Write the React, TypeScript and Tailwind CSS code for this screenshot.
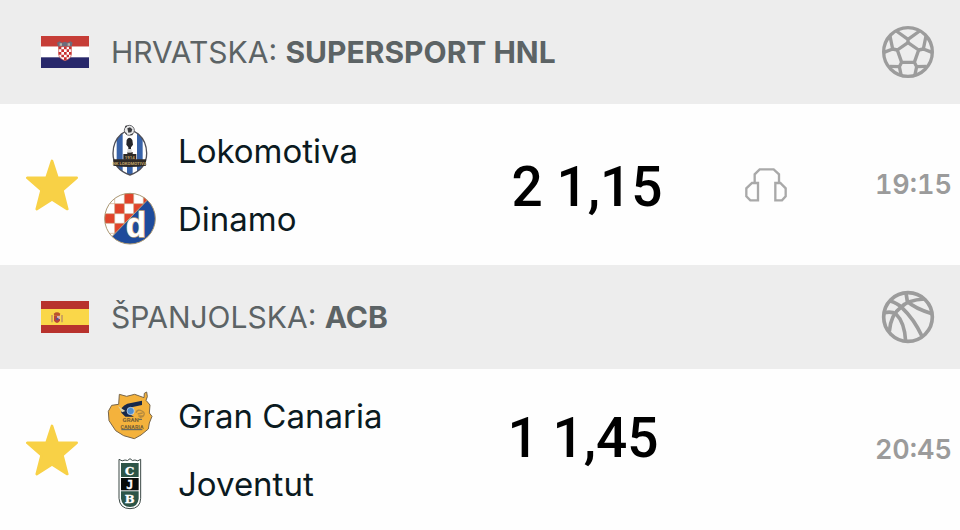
import type { ReactNode } from "react";
import { twMerge } from "tailwind-merge";

function CroatiaFlag() {
    return (
        <svg viewBox="0 0 144 96" className="w-12 h-8 shrink-0" role="img" aria-label="Hrvatska">
            <rect width="144" height="32" fill="#c63d37" />
            <rect y="32" width="144" height="32" fill="#fff" />
            <rect y="64" width="144" height="32" fill="#28286b" />
            <path d="M48 20l8-4 7 4 9-3 8 3 8-4 7 4-4 14H52z" fill="#6b6d7c" />
            <path d="M56 22h7v7h-7zM80 22h7v7h-7z" fill="#b9b3a6" />
            <path d="M53 32h38v22q0 14-19 20-19-6-19-20z" fill="#fff" stroke="#c63d37" strokeWidth="2" />
            <path
                d="M53 32h8v8h-8zM69 32h8v8h-8zM84 32h7v8h-7zM61 40h8v8h-8zM77 40h7v8h-7zM53 48h8v8h-8zM69 48h8v8h-8zM84 48h7v8h-7zM61 56h8v8h-8zM77 56h7v8h-7zM69 64h8v8h-8z"
                fill="#c8302f"
            />
        </svg>
    );
}

function SpainFlag() {
    return (
        <svg viewBox="0 0 144 96" className="w-12 h-8 shrink-0" role="img" aria-label="Španjolska">
            <rect width="144" height="96" fill="#b8322d" />
            <rect y="24" width="144" height="48" fill="#fad749" />
            <path d="M31 42h4v22h-4zM61 42h4v22h-4z" fill="#b98a67" />
            <path d="M38 38q10-8 20 0l-2 6H40z" fill="#b8532d" />
            <path d="M39 44h18v14q-2 8-9 8t-9-8z" fill="#b8433a" />
            <path d="M48 45h9v9h-9z" fill="#d5b5b0" />
            <circle cx="49" cy="54" r="4" fill="#54548a" />
        </svg>
    );
}

function SoccerBall() {
    return (
        <svg
            viewBox="62 45 162 162"
            className="size-[54px] shrink-0"
            fill="none"
            stroke="#9c9c9c"
            strokeWidth="10"
            strokeLinejoin="round"
            role="img"
            aria-label="Nogomet"
        >
            <circle cx="143" cy="126" r="73" />
            <path d="M143 98l32 22-13 37h-38l-13-37z" />
            <path d="M143 98V88L108 63M143 88l35-25" />
            <path d="M111 120l-14-3-26 10M97 117l-8-39M175 120l14-3 26 10M189 117l8-39" />
            <path d="M124 157l-7 13-30-1M117 170l6 28M162 157l7 13 30-1M169 170l-6 28" />
        </svg>
    );
}

function Basketball() {
    return (
        <svg
            viewBox="62 45 162 162"
            className="size-[54px] shrink-0"
            fill="none"
            stroke="#9c9c9c"
            strokeWidth="11"
            role="img"
            aria-label="Košarka"
        >
            <circle cx="143" cy="126" r="73" />
            <path d="M88 77Q112 85 124 97 162 133 185 184" />
            <path d="M193 72Q140 75 122 97 92 118 87 169" />
            <path d="M71 113Q95 108 107 117 133 142 136 199" />
            <path d="M137 54l4 25Q163 100 215 116" />
        </svg>
    );
}

function Headphones() {
    return (
        <svg
            viewBox="764 83 126 102"
            className="w-[42px] h-[34px]"
            fill="none"
            stroke="#a9a9a9"
            strokeWidth="7"
            role="img"
            aria-label="Audio prijenos"
        >
            <path d="M793 128v-26l15-15h42l16 15v26" />
            <path d="M803 128h-18l-17 16v24l12 12h23zM855 128h15l16 16v24l-11 12h-20z" />
        </svg>
    );
}

function LokomotivaLogo() {
    return (
        <svg viewBox="276 39 168 168" className="size-14 shrink-0" aria-hidden="true">
            <clipPath id="lokomotiva-shield">
                <path d="M334 72q-25 22-25 58 0 48 51 65 50-17 50-65 0-36-25-58-25-20-51 0z" />
            </clipPath>
            <g clipPath="url(#lokomotiva-shield)">
                <path d="M300 50h120v150H300z" fill="#fff" />
                <path d="M320 50h18v150h-18zM381 50h17v150h-17zM351 160h17v40h-17z" fill="#3863a9" />
            </g>
            <path
                d="M334 72q-25 22-25 58 0 48 51 65 50-17 50-65 0-36-25-58-25-20-51 0z"
                fill="none"
                stroke="#4d4e57"
                strokeWidth="4"
            />
            <path d="M350 90q8-13 17 0l2 14-6 8v17h-8v-17l-6-8z" fill="#252529" />
            <path d="M340 149v-17h12v-6h16v6h11v17z" fill="#2d2926" />
            <path d="M352 117h13v11h-13z" fill="#d9d9d9" />
            <path d="M310 148h98v19q-49 8-98 0z" fill="#2d2926" />
            <text x="359" y="147" textAnchor="middle" fontSize="13" className="font-['Roboto'] font-bold" fill="#c2a56a">
                1914
            </text>
            <text x="359" y="164" textAnchor="middle" fontSize="13" className="font-['Roboto'] font-bold" fill="#c2a56a">
                NK LOKOMOTIVA
            </text>
            <circle cx="358" cy="61" r="15" fill="#e9e9e9" stroke="#66676c" strokeWidth="3" />
            <path d="M352 55l8-3 7 6-3 9-9 1zM345 48l8-2-6 8zM369 70l-2 6-8-2zM344 66l6 3v6z" fill="#3a3b3f" />
        </svg>
    );
}

function DinamoLogo() {
    return (
        <svg viewBox="276 243 168 168" className="size-14 shrink-0 overflow-visible" aria-hidden="true">
            <clipPath id="dinamo-circle">
                <circle cx="360" cy="326" r="76" />
            </clipPath>
            <g clipPath="url(#dinamo-circle)">
                <path d="M280 245h160v162H280z" fill="#fff" />
                <path
                    d="M343 245h28v36h-28zM400 245h40v36h-40zM314 281h29v30h-29zM371 281h29v30h-29zM280 311h34v29h-34zM343 311h28v29h-28zM314 340h29v30h-29z"
                    fill="#e0442b"
                />
                <path
                    d="M314 245v130M343 245v110M371 245v80M400 245v50M280 281h130M280 311h100M280 340h70M280 370h40"
                    stroke="#cfa888"
                    strokeWidth="2"
                />
                <path d="M420 262L298 388l40 30h110V262z" fill="#1e4b9b" stroke="#c4a779" strokeWidth="3" />
            </g>
            <circle cx="360" cy="326" r="76" fill="none" stroke="#aa9773" strokeWidth="3" />
            <text
                x="378"
                y="381"
                textAnchor="middle"
                fontSize="104"
                className="font-['Liberation_Mono'] font-bold"
                fill="#fff"
                stroke="#c4a779"
                strokeWidth="4"
                paintOrder="stroke"
            >
                d
            </text>
        </svg>
    );
}

function GranCanariaLogo() {
    return (
        <svg viewBox="276 39 168 168" className="size-14 shrink-0" aria-hidden="true">
            <path
                d="M328 58l22 6 24-6 28 10 1-13 7-4 2 14-4 11 12 14-2 24 8 10-8 20-3 18-22 18-20 11-32-9-24-15-20-30-2-28 10-18 21-3z"
                fill="#f4b23c"
                stroke="#77664c"
                strokeWidth="3"
                strokeLinejoin="round"
            />
            <path d="M396 77l-44 9q-22 9-18 27l12 12h26l-16-9q-5-12 12-20l28-6z" fill="#17284a" />
            <path d="M324 93l22 15-10 4z" fill="#dfd3aa" />
            <circle cx="362" cy="108" r="11" fill="#4f8ed0" stroke="#dbe5ee" strokeWidth="2" />
            <path d="M378 113q4-12 18-5 12 6 3 16l-10 4M383 117l15-3M385 123h14" fill="none" stroke="#b58a3e" strokeWidth="4" />
            <text x="362" y="141" textAnchor="middle" fontSize="18" className="font-['Roboto'] font-bold" fill="#755f35">
                GRAN
            </text>
            <text x="366" y="161" textAnchor="middle" fontSize="16" className="font-['Roboto'] font-bold" fill="#755f35">
                CANARIA
            </text>
            <path d="M386 133h10M334 164h63" stroke="#4e5d68" strokeWidth="3" />
        </svg>
    );
}

function JoventutLogo() {
    return (
        <svg viewBox="276 246 168 168" className="size-14 shrink-0" aria-hidden="true">
            <path
                d="M327 256q10 8 18 2 8 5 15-4 7 9 15 4 8 6 17-2v117q-1 31-32 31t-33-31z"
                fill="#fff"
                stroke="#3b4845"
                strokeWidth="3"
            />
            <path d="M333 267h53v42h-53zM333 352h53v22q-3 25-26 25t-27-25z" fill="#2d5447" />
            <path d="M333 312h53v37h-53z" fill="#080b0a" />
            <g textAnchor="middle" fontSize="35" fill="#fff" stroke="#fff" strokeWidth="1">
                <text x="359" y="302" className="font-['DejaVu_Serif'] font-bold">C</text>
                <text x="359" y="344" className="font-['DejaVu_Sans_Mono'] font-bold">J</text>
                <text x="359" y="387" className="font-['DejaVu_Serif'] font-bold">B</text>
            </g>
        </svg>
    );
}

interface LeagueHeaderProps {
    flag: ReactNode;
    country: string;
    league: string;
    sport: ReactNode;
}

function LeagueHeader({ flag, country, league, sport }: LeagueHeaderProps) {
    return (
        <header className="flex items-center h-[104px] pl-[41px] pr-[25px] bg-[#ededed]">
            {flag}
            <h2 className="grow pl-[22px] text-[30px] leading-8 text-[#5c6365]">
                {country}: <span className="font-bold">{league}</span>
            </h2>
            {sport}
        </header>
    );
}

function FavoriteButton() {
    return (
        <button type="button" aria-label="Favorit" aria-pressed="true" className="shrink-0 cursor-pointer">
            <svg viewBox="46 141 160 160" className="size-[52px]">
                <path
                    d="M126 147l17 52h59l-44 38 15 58-47-30-47 30 15-58-44-38h59z"
                    fill="#f8d146"
                    stroke="#f8d146"
                    strokeWidth="8"
                    strokeLinejoin="round"
                />
            </svg>
        </button>
    );
}

interface Team {
    name: string;
    logo: ReactNode;
}

interface MatchRowProps {
    teams: Team[];
    odds: string;
    time: string;
    hasAudio?: boolean;
    /** Extra classes for the odds cell */
    oddsClassName?: string;
}

function MatchRow({ teams, odds, time, hasAudio, oddsClassName }: MatchRowProps) {
    return (
        <div className="flex items-center h-[161px] pl-[26px] pr-2 bg-[#fefefe]">
            <div className="flex items-center gap-6 w-[52%] shrink-0">
                <FavoriteButton />
                <ul>
                    {teams.map((team) => (
                        <li key={team.name} className="flex items-center gap-5 h-[68px] text-[33px] leading-10 text-[#0b1a21]">
                            {team.logo}
                            {team.name}
                        </li>
                    ))}
                </ul>
            </div>
            <p
                className={twMerge(
                    "grow pt-1 font-['Roboto'] font-medium text-[55px] leading-16 text-black",
                    oddsClassName,
                )}
            >
                {odds}
            </p>
            {hasAudio && <Headphones />}
            <time className="w-[165px] shrink-0 text-right text-[27px] leading-8 font-semibold tabular-nums text-[#9b9b9b]">
                {time}
            </time>
        </div>
    );
}

export default function App() {
    return (
        <main className="font-['Inter',sans-serif] bg-[#fefefe]">
            <section>
                <LeagueHeader flag={<CroatiaFlag />} country="HRVATSKA" league="SUPERSPORT HNL" sport={<SoccerBall />} />
                <MatchRow
                    teams={[
                        { name: "Lokomotiva", logo: <LokomotivaLogo /> },
                        { name: "Dinamo", logo: <DinamoLogo /> },
                    ]}
                    odds="2 1,15"
                    time="19:15"
                    hasAudio
                    oddsClassName="pl-1"
                />
            </section>
            <section>
                <LeagueHeader flag={<SpainFlag />} country="ŠPANJOLSKA" league="ACB" sport={<Basketball />} />
                <MatchRow
                    teams={[
                        { name: "Gran Canaria", logo: <GranCanariaLogo /> },
                        { name: "Joventut", logo: <JoventutLogo /> },
                    ]}
                    odds="1 1,45"
                    time="20:45"
                    oddsClassName="pb-7"
                />
            </section>
        </main>
    );
}
